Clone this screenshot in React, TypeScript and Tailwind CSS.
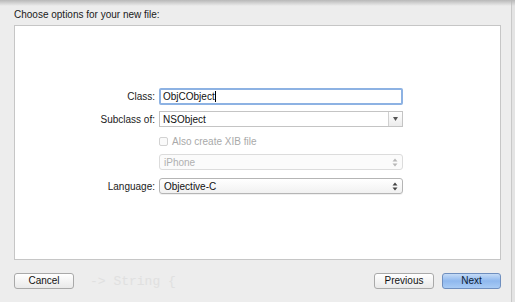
import React from "react";

const font = { fontFamily: '"Liberation Sans", Arial, sans-serif' };

function Updown({ dim }: { dim?: boolean }) {
  const c = dim ? "#b8b8b8" : "#444";
  return (
    <svg width="6" height="9" viewBox="0 0 6 9" className="shrink-0">
      <path d="M3 0.5 L5.5 3.5 H0.5 Z" fill={c} />
      <path d="M3 8.5 L5.5 5.5 H0.5 Z" fill={c} />
    </svg>
  );
}

function Label({ children }: { children: React.ReactNode }) {
  return <div className="text-right text-[10px] text-[#222] pr-[4px]">{children}</div>;
}

export default function App() {
  return (
    <div className="w-[515px] h-[302px] bg-[#e4e4e4] overflow-hidden relative" style={font}>
      {/* sheet */}
      <div className="w-[512px] h-[302px] bg-[#ededed] border-r border-[#c9c9c9] flex flex-col pl-[14px]">
        <div className="h-[25px] pt-[9px] text-[10px] leading-[12px] text-[#1a1a1a]">
          Choose options for your new file:
        </div>
        <div className="w-[487px] h-[235px] bg-white border border-[#c6c6c6] pt-[62px]">
          <div className="grid grid-cols-[144px_244px] items-center">
            <Label>Class:</Label>
            <div className="h-[17px] rounded-[2px] border-2 border-[#8db2e3] bg-white flex items-center pl-[2px] text-[10px] text-[#111]">
              ObjCObject<span className="inline-block w-px h-[11px] bg-black" />
            </div>

            <div className="col-span-2 h-[6px]" />
            <Label>Subclass of:</Label>
            <div className="h-[16px] border border-[#c4c4c4] bg-white flex items-stretch text-[10px] text-[#111]">
              <div className="flex-1 flex items-center pl-[3px]">NSObject</div>
              <div className="w-[14px] border-l border-[#d0d0d0] bg-gradient-to-b from-white to-[#ececec] flex items-center justify-center">
                <svg width="5" height="4" viewBox="0 0 5 4">
                  <path d="M0 0 H5 L2.5 4 Z" fill="#555" />
                </svg>
              </div>
            </div>

            <div className="col-span-2 h-[9px]" />
            <div />
            <div className="h-[10px] flex items-center gap-[4px] text-[10px] text-[#a9a9a9]">
              <span className="w-[9px] h-[9px] border border-[#d2d2d2] rounded-[2px] bg-[#fafafa]" />
              Also create XIB file
            </div>

            <div className="col-span-2 h-[8px]" />
            <div />
            <div className="h-[16px] rounded-[3px] border border-[#dcdcdc] bg-[#fbfbfb] flex items-center justify-between pl-[4px] pr-[4px] text-[10px] text-[#b0b0b0]">
              iPhone
              <Updown dim />
            </div>

            <div className="col-span-2 h-[8px]" />
            <Label>Language:</Label>
            <div className="h-[16px] rounded-[3px] border border-[#b5b5b5] bg-gradient-to-b from-white to-[#f1f1f1] shadow-[0_1px_0_rgba(0,0,0,0.06)] flex items-center justify-between pl-[4px] pr-[4px] text-[10px] text-[#111]">
              Objective-C
              <Updown />
            </div>
          </div>
        </div>

        <div className="mt-[13px] w-[487px] flex items-center">
          <button className="w-[60px] h-[16px] rounded-[3px] border border-[#a9a9a9] bg-gradient-to-b from-white to-[#e9e9e9] text-[10px] text-[#111] leading-none">
            Cancel
          </button>
          <span
            className="ml-[16px] text-[13px] text-[#e0e0e0] leading-none"
            style={{ fontFamily: '"Liberation Mono", monospace' }}
          >
            -&gt; String {"{"}
          </span>
          <div className="flex-1" />
          <button className="w-[60px] h-[16px] rounded-[3px] border border-[#a9a9a9] bg-gradient-to-b from-white to-[#e9e9e9] text-[10px] text-[#111] leading-none">
            Previous
          </button>
          <button className="ml-[8px] w-[59px] h-[16px] rounded-[3px] border border-[#6f8fbf] bg-gradient-to-b from-[#c5dbf6] via-[#8fb8ee] to-[#a8cbf5] text-[10px] text-[#0c1a33] leading-none">
            Next
          </button>
        </div>
      </div>
      {/* top shadow of the title bar */}
      <div className="absolute top-0 left-0 w-full h-[6px] bg-gradient-to-b from-[#b8b8b8] to-transparent pointer-events-none" />
    </div>
  );
}
